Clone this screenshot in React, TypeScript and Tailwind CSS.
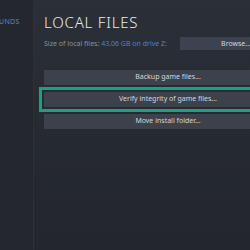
export default function App() {
  return (
    <div
      className="flex h-[250px] w-[250px] overflow-hidden bg-[#25282f]"
      style={{ fontFamily: '"Noto Sans", "Open Sans", sans-serif' }}
    >
      {/* Sidebar (cut off) */}
      <div className="w-[33px] shrink-0 bg-[#24272e] pt-[18px]">
        <div className="ml-[-1px] text-[7px] leading-[8px] tracking-[0.3px] text-[#5b86c8]">UNDS</div>
      </div>

      {/* Main panel */}
      <div className="flex-1 border-l border-[#2c3038] bg-gradient-to-b from-[#2b2f37] via-[#262a31] to-[#23262d] pl-[10px] pt-[14px]">
        <div className="w-[248px]">
          <h1 className="text-[15px] leading-[16px] font-light tracking-[0.8px] text-[#e9ecef]">LOCAL FILES</h1>

          <div className="mt-[7px] flex items-center justify-between">
            <div className="text-[7px] leading-[9px] text-[#8b929a]">
              Size of local files: <span className="text-[#4f7fd6]">43.06 GB on drive Z:</span>
            </div>
            <button className="h-[13px] w-[112px] bg-[#3d4250] text-[7px] leading-[13px] text-[#d3d7dc]">
              Browse...
            </button>
          </div>

          <div className="mt-[20px] flex flex-col gap-[7px]">
            <button className="h-[15px] w-full bg-[#3c414c] text-[7px] text-[#d3d7dc]">Backup game files...</button>
            <button className="h-[15px] w-full bg-[#3c414c] text-[7px] text-[#d3d7dc] outline-[3px] outline-offset-[2px] outline-[#1f9e82] outline-solid">
              Verify integrity of game files...
            </button>
            <button className="h-[15px] w-full bg-[#3c414c] text-[7px] text-[#d3d7dc]">Move install folder...</button>
          </div>
        </div>
      </div>
    </div>
  );
}
